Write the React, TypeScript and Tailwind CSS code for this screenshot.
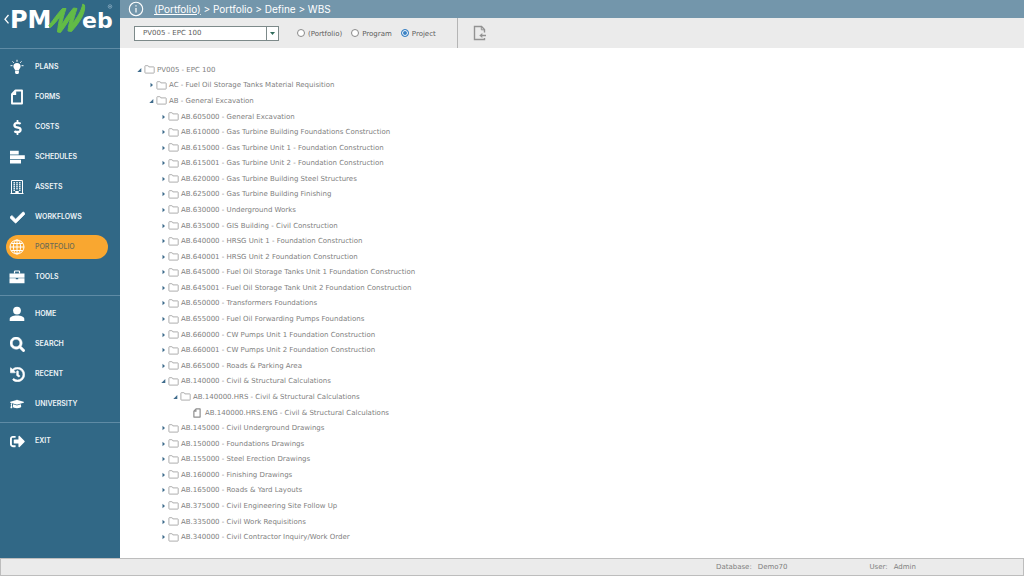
import type { ReactNode } from "react";
import clsx from "clsx";
import {
  FaCheck,
  FaDollarSign,
  FaGraduationCap,
  FaHistory,
  FaSearch,
  FaSignOutAlt,
} from "react-icons/fa";

interface NavItem {
  label: string;
  icon: ReactNode;
  active?: boolean;
}

interface TreeNode {
  level: number;
  label: string;
  state?: "open" | "leaf";
}

function BulbIcon() {
  return (
    <svg viewBox="0 0 16 16" className="size-4" fill="currentColor">
      <path d="M8 4a3.600 3.600 0 0 0-3.600 3.600c0 1.700 1.400 2.300 1.700 3.900h3.800c.3-1.600 1.700-2.200 1.700-3.900A3.600 3.600 0 0 0 8 4ZM6.100 12h3.800v2l-.8 1H6.900l-.8-1Z" />
      <path
        d="M8 .8v2M3.500 2.400l1.300 1.400M12.500 2.400l-1.300 1.400M1.500 6.700h2M12.500 6.700h2"
        stroke="currentColor"
        strokeWidth="1"
      />
    </svg>
  );
}

function PageIcon({ className }: { className?: string }) {
  return (
    <svg viewBox="0 0 16 16" className={className} fill="none">
      <path
        d="M6.500 1.500h6.500v13H3V5.200Z"
        stroke="currentColor"
        strokeWidth="1.900"
        strokeLinejoin="round"
      />
      <path d="M3 6 7.200 1.500v4.500Z" fill="currentColor" />
    </svg>
  );
}

function BarsIcon() {
  return (
    <svg viewBox="0 0 16 16" className="size-4" fill="currentColor">
      <path d="M1 1.800h8.700v3.600H1ZM1 6.200h14.800v3.800H1ZM1 10.800h11v3.600H1Z" />
    </svg>
  );
}

function BuildingIcon() {
  return (
    <svg viewBox="0 0 16 16" className="size-4" fill="none" stroke="currentColor">
      <path d="M2.500 1.500h11v13h-11Z" strokeWidth="1" />
      <path d="M1.500 14.500h13" />
      <path d="M5.200 3v9M8 3v8M10.800 3v9" strokeWidth="1.400" strokeDasharray="1.400 .6" />
      <path d="M6.300 12h3.400v2.500H6.300Z" fill="currentColor" stroke="none" />
    </svg>
  );
}

function GlobeIcon() {
  return (
    <svg viewBox="0 0 16 16" className="size-4" fill="none" stroke="currentColor">
      <circle cx="8" cy="8" r="7" />
      <ellipse cx="8" cy="8" rx="3.600" ry="7" />
      <path d="M8 1v14M1 8h14M2.300 4.500h11.400M2.300 11.500h11.400" />
    </svg>
  );
}

function BriefcaseIcon() {
  return (
    <svg viewBox="0 0 16 16" className="size-4" fill="currentColor">
      <path d="M.5 4.500h15v4.300H.5ZM.5 9.300h6.300v.9h2.400v-.9h6.300v4.900H.5Z" />
      <path d="M5.500 4.500V2.700q0-.7.700-.7h3.600q.7 0 .7.700v1.800" fill="none" stroke="currentColor" strokeWidth="1.200" />
    </svg>
  );
}

function PersonIcon() {
  return (
    <svg viewBox="0 0 16 16" className="size-4" fill="currentColor">
      <circle cx="8" cy="4.600" r="3.900" />
      <path d="M.7 15v-2c0-2.400 3-3.600 7.300-3.600s7.300 1.200 7.300 3.600v2Z" />
    </svg>
  );
}

function FolderIcon() {
  return (
    <svg viewBox="0 0 11 9" className="h-[9px] w-[11px] flex-none" fill="none">
      <path
        d="M.9 1.300q0-.6.6-.6h2.300q.5 0 .7.500l.3.700h4.800q.6 0 .6.600v5q0 .6-.6.600H1.500q-.6 0-.6-.6Z"
        stroke="#9a9a9a"
        strokeWidth=".8"
      />
    </svg>
  );
}

function Logo() {
  return (
    <svg viewBox="0 0 120 48" className="h-12 w-[120px]" role="img" aria-label="PMWeb">
      <path d="M8.500 15 5 19.200l3.500 4.200" fill="none" stroke="#fff" strokeWidth="1.300" />
      <g fill="#fff" fontFamily="DejaVu Sans, sans-serif" fontWeight="700">
        <text x="10" y="28" fontSize="24">PM</text>
        <text x="82" y="28" fontSize="22">eb</text>
      </g>
      <path
        d="M49 25.500C54 19 58 13 62.500 8.500L66 8.500C64 14 62.500 20 61.500 25C66 18 69.500 12.500 73.500 8L77 8.500C75 14 73.500 20 72.500 24C77 17.500 81.500 11 82.800 4L84.500 5C86 13 79 23 71.500 31.500L68 31C68.500 26 69.500 21 71 17C67.500 22.500 64 28 60.500 32.500L57.500 32C58 26 59 20.500 60.500 16C57.500 20 54 24.500 50.500 27.500Z"
        fill="#62bb46"
        stroke="#62bb46"
        strokeWidth="1"
      />
      <circle cx="110" cy="6.500" r="1.800" fill="none" stroke="#8fb0c4" strokeWidth=".7" />
      <circle cx="110" cy="6.500" r=".8" fill="#8fb0c4" />
    </svg>
  );
}

const mainItems: NavItem[] = [
  { label: "PLANS", icon: <BulbIcon /> },
  { label: "FORMS", icon: <PageIcon className="size-4" /> },
  { label: "COSTS", icon: <FaDollarSign className="size-[15px]" /> },
  { label: "SCHEDULES", icon: <BarsIcon /> },
  { label: "ASSETS", icon: <BuildingIcon /> },
  { label: "WORKFLOWS", icon: <FaCheck className="size-[15px]" stroke="currentColor" strokeWidth={24} /> },
  { label: "PORTFOLIO", icon: <GlobeIcon />, active: true },
  { label: "TOOLS", icon: <BriefcaseIcon /> },
];

const userItems: NavItem[] = [
  { label: "HOME", icon: <PersonIcon /> },
  { label: "SEARCH", icon: <FaSearch className="size-[15px]" stroke="currentColor" strokeWidth={16} /> },
  { label: "RECENT", icon: <FaHistory className="size-[15px]" stroke="currentColor" strokeWidth={16} /> },
  { label: "UNIVERSITY", icon: <FaGraduationCap className="size-[14px]" /> },
];

const exitItems: NavItem[] = [
  { label: "EXIT", icon: <FaSignOutAlt className="size-[15px]" /> },
];

const nodes: TreeNode[] = [
  { level: 1, label: "PV005 - EPC 100", state: "open" },
  { level: 2, label: "AC - Fuel Oil Storage Tanks Material Requisition" },
  { level: 2, label: "AB - General Excavation", state: "open" },
  { level: 3, label: "AB.605000 - General Excavation" },
  { level: 3, label: "AB.610000 - Gas Turbine Building Foundations Construction" },
  { level: 3, label: "AB.615000 - Gas Turbine Unit 1 - Foundation Construction" },
  { level: 3, label: "AB.615001 - Gas Turbine Unit 2 - Foundation Construction" },
  { level: 3, label: "AB.620000 - Gas Turbine Building Steel Structures" },
  { level: 3, label: "AB.625000 - Gas Turbine Building Finishing" },
  { level: 3, label: "AB.630000 - Underground Works" },
  { level: 3, label: "AB.635000 - GIS Building - Civil Construction" },
  { level: 3, label: "AB.640000 - HRSG Unit 1 - Foundation Construction" },
  { level: 3, label: "AB.640001 - HRSG Unit 2 Foundation Construction" },
  { level: 3, label: "AB.645000 - Fuel Oil Storage Tanks Unit 1 Foundation Construction" },
  { level: 3, label: "AB.645001 - Fuel Oil Storage Tank Unit 2 Foundation Construction" },
  { level: 3, label: "AB.650000 - Transformers Foundations" },
  { level: 3, label: "AB.655000 - Fuel Oil Forwarding Pumps Foundations" },
  { level: 3, label: "AB.660000 - CW Pumps Unit 1 Foundation Construction" },
  { level: 3, label: "AB.660001 - CW Pumps Unit 2 Foundation Construction" },
  { level: 3, label: "AB.665000 - Roads & Parking Area" },
  { level: 3, label: "AB.140000 - Civil & Structural Calculations", state: "open" },
  { level: 4, label: "AB.140000.HRS - Civil & Structural Calculations", state: "open" },
  { level: 5, label: "AB.140000.HRS.ENG - Civil & Structural Calculations", state: "leaf" },
  { level: 3, label: "AB.145000 - Civil Underground Drawings" },
  { level: 3, label: "AB.150000 - Foundations Drawings" },
  { level: 3, label: "AB.155000 - Steel Erection Drawings" },
  { level: 3, label: "AB.160000 - Finishing Drawings" },
  { level: 3, label: "AB.165000 - Roads & Yard Layouts" },
  { level: 3, label: "AB.375000 - Civil Engineering Site Follow Up" },
  { level: 3, label: "AB.335000 - Civil Work Requisitions" },
  { level: 3, label: "AB.340000 - Civil Contractor Inquiry/Work Order" },
];

const indents = ["pl-0", "pl-3", "pl-6", "pl-9", "pl-12"];

function NavList({ items }: { items: NavItem[] }) {
  return (
    <ul className="py-[3px]">
      {items.map((item) => (
        <li key={item.label} className="flex h-[30px] items-center px-[6px]">
          <a
            href="#"
            className={clsx(
              "flex h-6 w-[102px] items-center gap-[7px] rounded-full font-['Inter',sans-serif]",
              item.active
                ? "bg-[#f9a730] font-medium text-[#6b6a55]"
                : "font-semibold text-[#eef3f6]",
            )}
          >
            <span className="flex w-[22px] flex-none justify-center text-white">
              {item.icon}
            </span>
            {item.label}
          </a>
        </li>
      ))}
    </ul>
  );
}

function TreeRow({ node }: { node: TreeNode }) {
  const isOpen = node.state === "open";
  const isLeaf = node.state === "leaf";

  return (
    <li
      role="treeitem"
      aria-level={node.level}
      aria-expanded={isLeaf ? undefined : isOpen}
      className={clsx("flex flex-1 items-center", indents[node.level - 1])}
    >
      <svg viewBox="0 0 6 6" className="mr-[2px] size-[6px] flex-none" fill="#3f6c8c">
        {!isLeaf && <path d={isOpen ? "M5.300 1v4H1.300Z" : "M2.500 .8 5 3 2.500 5.200Z"} />}
      </svg>
      {isLeaf ? (
        <PageIcon className="mr-px size-[10px] flex-none text-[#8f8f8f]" />
      ) : (
        <FolderIcon />
      )}
      <span className="ml-[2px] whitespace-nowrap">{node.label}</span>
    </li>
  );
}

function ScopeRadio({ label, checked }: { label: string; checked?: boolean }) {
  return (
    <label className="flex items-center gap-[3px]">
      <input
        type="radio"
        name="scope"
        defaultChecked={checked}
        className="size-2 appearance-none rounded-full border border-[#8a8a8a] bg-white checked:border-[#3b82c4] checked:bg-[#3b82c4] checked:shadow-[inset_0_0_0_1px_#fff]"
      />
      <span className="pt-[2px]">{label}</span>
    </label>
  );
}

function Toolbar() {
  return (
    <div className="flex h-[30px] flex-none items-center bg-[#ebebeb] pl-[14px] text-[#5c5c5c]">
      <div className="relative h-[15px] w-[145px]">
        <select
          aria-label="Project"
          className="h-full w-full appearance-none border border-[#7d8a8a] bg-white pt-px pl-2"
        >
          <option>PV005 - EPC 100</option>
        </select>
        <span className="pointer-events-none absolute inset-y-0 right-0 flex w-[13px] items-center justify-center border border-[#7d8a8a]">
          <svg viewBox="0 0 5 3" className="h-[3px] w-[5px]" fill="#2f6b5a">
            <path d="M0 0h5L2.500 3Z" />
          </svg>
        </span>
      </div>
      <div className="ml-[18px] flex gap-[9px]">
        <ScopeRadio label="(Portfolio)" />
        <ScopeRadio label="Program" />
        <ScopeRadio label="Project" checked />
      </div>
      <div className="ml-[21px] flex h-full items-center border-l border-[#b5b5b5] pl-[14px]">
        <button type="button" aria-label="Import">
          <svg viewBox="0 0 16 16" className="size-4" fill="none" stroke="#929292">
            <path d="M12.500 7.500V4.500L9.500 1.500H2.500v13h10v-1.500" strokeWidth="1.400" />
            <path d="M9.300 1.500v3.300h3.300" />
            <path d="M14 10.500H9.500" strokeWidth="1.500" />
            <path d="M7.300 10.500 10.300 8v5Z" fill="#929292" stroke="none" />
          </svg>
        </button>
      </div>
    </div>
  );
}

function App() {
  return (
    <div className="flex min-h-screen flex-col bg-white font-['DejaVu_Sans',sans-serif] text-[7px] text-[#808080]">
      <div className="flex flex-1">
        <aside className="w-[120px] flex-none bg-[#316886]">
          <Logo />
          <nav className="divide-y divide-[#5f8ba5] border-t border-[#5f8ba5]">
            <NavList items={mainItems} />
            <NavList items={userItems} />
            <NavList items={exitItems} />
          </nav>
        </aside>

        <main className="flex min-w-0 flex-1 flex-col">
          <header className="flex h-[18px] flex-none items-center gap-[10px] bg-[#7396ab] pl-2 font-['Inter',sans-serif] text-[10px] text-white">
            <svg viewBox="0 0 16 16" className="size-4" fill="none" stroke="currentColor">
              <circle cx="8" cy="8" r="6.700" strokeWidth="1.100" />
              <path d="M8 7v4.500M8 4.300v1.300" strokeWidth="1.200" />
            </svg>
            <p>
              <a href="#" className="underline">
                (Portfolio)
              </a>{" "}
              &gt; Portfolio &gt; Define &gt; WBS
            </p>
          </header>

          <Toolbar />

          <ul role="tree" className="flex flex-1 flex-col px-4 pt-[14px] pb-[13px] leading-[10px]">
            {nodes.map((node) => (
              <TreeRow key={node.label} node={node} />
            ))}
          </ul>
        </main>
      </div>

      <footer className="flex h-[18px] flex-none items-center justify-end gap-[82px] border border-[#bdbdbd] bg-[#ebebeb] pr-[107px]">
        <p className="flex gap-[6px]">
          <span>Database:</span>
          <span>Demo70</span>
        </p>
        <p className="flex gap-[6px]">
          <span>User:</span>
          <span>Admin</span>
        </p>
      </footer>
    </div>
  );
}

export default App;
